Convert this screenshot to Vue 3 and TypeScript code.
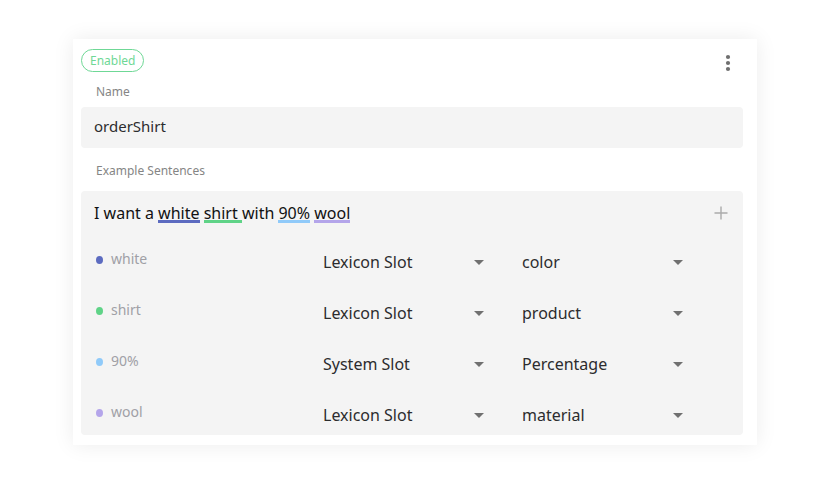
<script setup lang="ts">
import { ref } from 'vue'

interface Slot {
  word: string
  tone: string
  kind: string
  value: string
}

interface Segment {
  text: string
  tone?: string
}

const name = ref('orderShirt')

const segments: Segment[] = [
  { text: 'I want a ' },
  { text: 'white', tone: 'indigo' },
  { text: ' ' },
  { text: 'shirt ', tone: 'green' },
  { text: 'with ' },
  { text: '90%', tone: 'sky' },
  { text: ' ' },
  { text: 'wool', tone: 'violet' },
]

const kinds = ['Lexicon Slot', 'System Slot']
const values = ['color', 'product', 'Percentage', 'material']

const slots = ref<Slot[]>([
  { word: 'white', tone: 'indigo', kind: 'Lexicon Slot', value: 'color' },
  { word: 'shirt', tone: 'green', kind: 'Lexicon Slot', value: 'product' },
  { word: '90%', tone: 'sky', kind: 'System Slot', value: 'Percentage' },
  { word: 'wool', tone: 'violet', kind: 'Lexicon Slot', value: 'material' },
])
</script>

<template>
  <main class="page">
    <section class="card">
      <header class="top">
        <span class="status">Enabled</span>
        <button class="icon-button menu" type="button" aria-label="More options">
          <svg width="6" height="18" viewBox="0 0 6 18" aria-hidden="true">
            <circle cx="3" cy="3" r="2.1" />
            <circle cx="3" cy="9" r="2.1" />
            <circle cx="3" cy="15" r="2.1" />
          </svg>
        </button>
      </header>

      <label class="caption" for="intent-name">Name</label>
      <input id="intent-name" v-model="name" class="name" type="text" />

      <h2 class="caption sentences">Example Sentences</h2>
      <div class="panel">
        <div class="sentence-row">
          <p class="sentence">
            <span
              v-for="(part, i) in segments"
              :key="i"
              :class="part.tone ? ['mark', part.tone] : null"
            >{{ part.text }}</span>
          </p>
          <button class="icon-button plus" type="button" aria-label="Add sentence">
            <svg width="14" height="14" viewBox="0 0 14 14" aria-hidden="true">
              <path d="M7 0.5V13.5M0.5 7H13.5" />
            </svg>
          </button>
        </div>

        <div class="slots">
          <div v-for="slot in slots" :key="slot.word" class="slot">
            <div class="word">
              <span class="dot" :class="slot.tone"></span>
              <span>{{ slot.word }}</span>
            </div>
            <div class="select">
              <select v-model="slot.kind" :aria-label="`Slot type for ${slot.word}`">
                <option v-for="kind in kinds" :key="kind">{{ kind }}</option>
              </select>
              <svg class="arrow" width="10" height="5" viewBox="0 0 10 5" aria-hidden="true">
                <path d="M0 0H10L5 5Z" />
              </svg>
            </div>
            <div class="select">
              <select v-model="slot.value" :aria-label="`Slot value for ${slot.word}`">
                <option v-for="value in values" :key="value">{{ value }}</option>
              </select>
              <svg class="arrow" width="10" height="5" viewBox="0 0 10 5" aria-hidden="true">
                <path d="M0 0H10L5 5Z" />
              </svg>
            </div>
          </div>
        </div>
      </div>
    </section>
  </main>
</template>

<style>
body {
  background: #fff;
}
</style>

<style scoped>
.page {
  padding: 39px 83px 35px 73px;
  font-family: "Noto Sans", "Open Sans", sans-serif;
  font-size: 16px;
  line-height: 20px;
  color: #2c2c2e;
}

.page * {
  box-sizing: border-box;
}

.card {
  padding: 10px 14px 10px 8px;
  background: #fff;
  box-shadow: 0 0 20px rgba(0, 0, 0, 0.08);
}

.top {
  display: flex;
  justify-content: space-between;
  align-items: flex-start;
}

.status {
  padding: 0 8px;
  border: 1px solid #6fd896;
  border-radius: 12px;
  font-size: 12px;
  line-height: 21px;
  color: #6fd896;
}

.icon-button {
  display: flex;
  padding: 0;
  border: 0;
  background: none;
  cursor: pointer;
}

.menu {
  margin: 5px 12px 0 0;
  fill: #6f6f6f;
}

.caption {
  display: block;
  margin: 0;
  padding: 10px 15px 5px;
  font-size: 12px;
  font-weight: 400;
  line-height: 20px;
  color: #858585;
}

.sentences {
  padding: 13px 15px 10px;
}

.name {
  display: block;
  width: 100%;
  height: 41px;
  padding: 0 13px 4px;
  border: 0;
  border-radius: 4px;
  background: #f4f4f4;
  font: inherit;
  font-size: 15px;
  color: inherit;
}

.panel {
  border-radius: 4px;
  background: #f4f4f4;
}

.sentence-row {
  display: flex;
  justify-content: space-between;
  align-items: flex-start;
  padding: 12px 15px 0 13px;
}

.sentence {
  margin: 0;
  color: #111;
  white-space: pre-wrap;
}

.mark {
  background-repeat: no-repeat;
  background-position: left bottom 1px;
  background-size: 100% 3px;
}

.mark.indigo { background-image: linear-gradient(#5c6bc0, #5c6bc0); }
.mark.green { background-image: linear-gradient(#5fd387, #5fd387); }
.mark.sky { background-image: linear-gradient(#90caf9, #90caf9); }
.mark.violet { background-image: linear-gradient(#b4a5ea, #b4a5ea); }

.plus {
  margin-top: 3px;
  fill: none;
  stroke: #aaa;
  stroke-width: 1.4;
}

.slots {
  display: grid;
  gap: 13px;
  padding: 20px 0 1px;
}

.slot {
  display: grid;
  grid-template-columns: 242fr 199fr 199fr 22fr;
  height: 38px;
}

.word {
  display: flex;
  align-items: center;
  gap: 8px;
  padding: 0 15px 7px;
  font-size: 14px;
  color: #a0a0a6;
}

.dot {
  width: 7px;
  height: 8px;
  margin-top: 3px;
  border-radius: 50%;
}

.dot.indigo { background: #5c6bc0; }
.dot.green { background: #5fd387; }
.dot.sky { background: #90caf9; }
.dot.violet { background: #b4a5ea; }

.select {
  display: grid;
  grid-template-columns: 1fr 10px;
  align-items: center;
  padding-right: 38px;
}

.select select {
  grid-area: 1 / 1 / 2 / 3;
  width: 100%;
  height: 38px;
  padding: 0 14px 0 0;
  border: 0;
  appearance: none;
  background: none;
  font: inherit;
  color: inherit;
}

.arrow {
  grid-area: 1 / 2;
  fill: #707070;
  pointer-events: none;
}
</style>
